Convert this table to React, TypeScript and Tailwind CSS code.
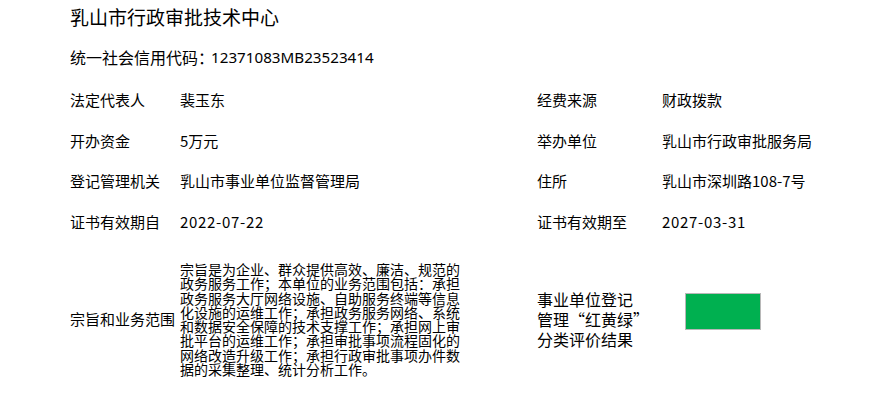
import React from "react";

const cjk = { fontFamily: '"Noto Sans CJK SC", "Noto Sans", sans-serif' };
const latin = { fontFamily: '"Noto Sans", "Noto Sans CJK SC", sans-serif' };

function Row({
  l1,
  v1,
  l2,
  v2,
  v1Date,
  v2Date,
}: {
  l1: string;
  v1: string;
  l2: string;
  v2: string;
  v1Date?: boolean;
  v2Date?: boolean;
}) {
  return (
    <div className="flex h-[40.5px] items-center text-[15px] text-black">
      <div className="w-[110px] shrink-0">{l1}</div>
      <div className={"w-[357px] shrink-0 " + (v1Date ? "tracking-[0.7px]" : "")}>{v1}</div>
      <div className="w-[125px] shrink-0">{l2}</div>
      <div className={v2Date ? "tracking-[0.7px]" : ""}>{v2}</div>
    </div>
  );
}

export default function App() {
  return (
    <div className="w-[892px] h-[407px] bg-white pl-[70px] overflow-hidden" style={cjk}>
      <div className="h-[35px] flex items-center text-[19px] text-black">乳山市行政审批技术中心</div>
      <div className="h-[45px] flex items-center text-[16px] text-black pb-[1px]">
        <span>统一社会信用代码：</span>
        <span className="-ml-[3px] text-[15.2px]" style={latin}>
          12371083MB23523414
        </span>
      </div>
      <Row l1="法定代表人" v1="裴玉东" l2="经费来源" v2="财政拨款" />
      <Row l1="开办资金" v1="5万元" l2="举办单位" v2="乳山市行政审批服务局" />
      <Row l1="登记管理机关" v1="乳山市事业单位监督管理局" l2="住所" v2="乳山市深圳路108-7号" />
      <Row l1="证书有效期自" v1="2022-07-22" l2="证书有效期至" v2="2027-03-31" v1Date v2Date />
      <div className="flex items-center pt-[20px] text-black">
        <div className="w-[110px] shrink-0 text-[15px]">宗旨和业务范围</div>
        <div className="w-[357px] shrink-0">
          <div className="w-[282px] text-[14px] leading-[14.25px]">
            宗旨是为企业、群众提供高效、廉洁、规范的政务服务工作；本单位的业务范围包括：承担政务服务大厅网络设施、自助服务终端等信息化设施的运维工作；承担政务服务网络、系统和数据安全保障的技术支撑工作；承担网上审批平台的运维工作；承担审批事项流程固化的网络改造升级工作；承担行政审批事项办件数据的采集整理、统计分析工作。
          </div>
        </div>
        <div className="flex items-center">
          <div className="w-[148px] shrink-0 text-[16px] leading-[20px]">
            事业单位登记
            <br />
            管理“红黄绿”
            <br />
            分类评价结果
          </div>
          <div className="w-[76px] h-[37px] bg-[#00b050] border border-[#b8b8b8] mb-[16px]" />
        </div>
      </div>
    </div>
  );
}
